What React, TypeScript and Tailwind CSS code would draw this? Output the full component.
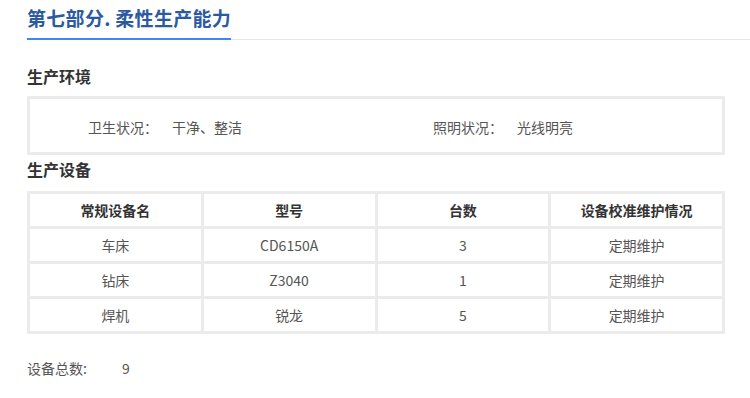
const rows = [
  { name: "车床", model: "CD6150A", count: 3, status: "定期维护" },
  { name: "钻床", model: "Z3040", count: 1, status: "定期维护" },
  { name: "焊机", model: "锐龙", count: 5, status: "定期维护" },
];

const headers = ["常规设备名", "型号", "台数", "设备校准维护情况"];

export default function App() {
  return (
    <div className="w-[750px] h-[398px] bg-white pl-[27px] font-['Noto_Sans_CJK_SC',sans-serif] text-[#555]">
      {/* Title */}
      <div className="flex border-b border-[#e6e6e6] pt-[4px]">
        <span className="-mb-px border-b-2 border-[#4285f4] pb-[6px] text-[19px] leading-[28px] tracking-[0.3px] font-bold text-[#2c5aa0]">
          第七部分. 柔性生产能力
        </span>
      </div>

      {/* Environment */}
      <h2 className="mt-[24px] text-[16px] leading-[24px] font-bold text-[#333]">生产环境</h2>
      <div className="mt-[8px] w-[698px] h-[59px] border-[3px] border-[#ebebeb] flex items-center pt-[3px] text-[14px]">
        <div className="w-[343px] pl-[58px]">
          <span>卫生状况：</span>
          <span className="ml-[14px]">干净、整洁</span>
        </div>
        <div className="pl-[60px]">
          <span>照明状况：</span>
          <span className="ml-[14px]">光线明亮</span>
        </div>
      </div>

      {/* Equipment */}
      <h2 className="mt-[2px] text-[16px] leading-[24px] font-bold text-[#333]">生产设备</h2>
      <div className="mt-[10px] w-[698px] grid grid-cols-4 gap-[3px] p-[3px] bg-[#ebebeb] text-[14px]">
        {headers.map((h) => (
          <div key={h} className="h-[32px] bg-white flex items-center justify-center font-bold text-[#333]">
            {h}
          </div>
        ))}
        {rows.map((r) => (
          <>
            <div key={r.name + "n"} className="h-[32px] bg-white flex items-center justify-center">{r.name}</div>
            <div key={r.name + "m"} className="h-[32px] bg-white flex items-center justify-center">{r.model}</div>
            <div key={r.name + "c"} className="h-[32px] bg-white flex items-center justify-center">{r.count}</div>
            <div key={r.name + "s"} className="h-[32px] bg-white flex items-center justify-center">{r.status}</div>
          </>
        ))}
      </div>

      <div className="mt-[24px] flex text-[14px] leading-[20px]">
        <span className="w-[95px]">设备总数:</span>
        <span>9</span>
      </div>
    </div>
  );
}
